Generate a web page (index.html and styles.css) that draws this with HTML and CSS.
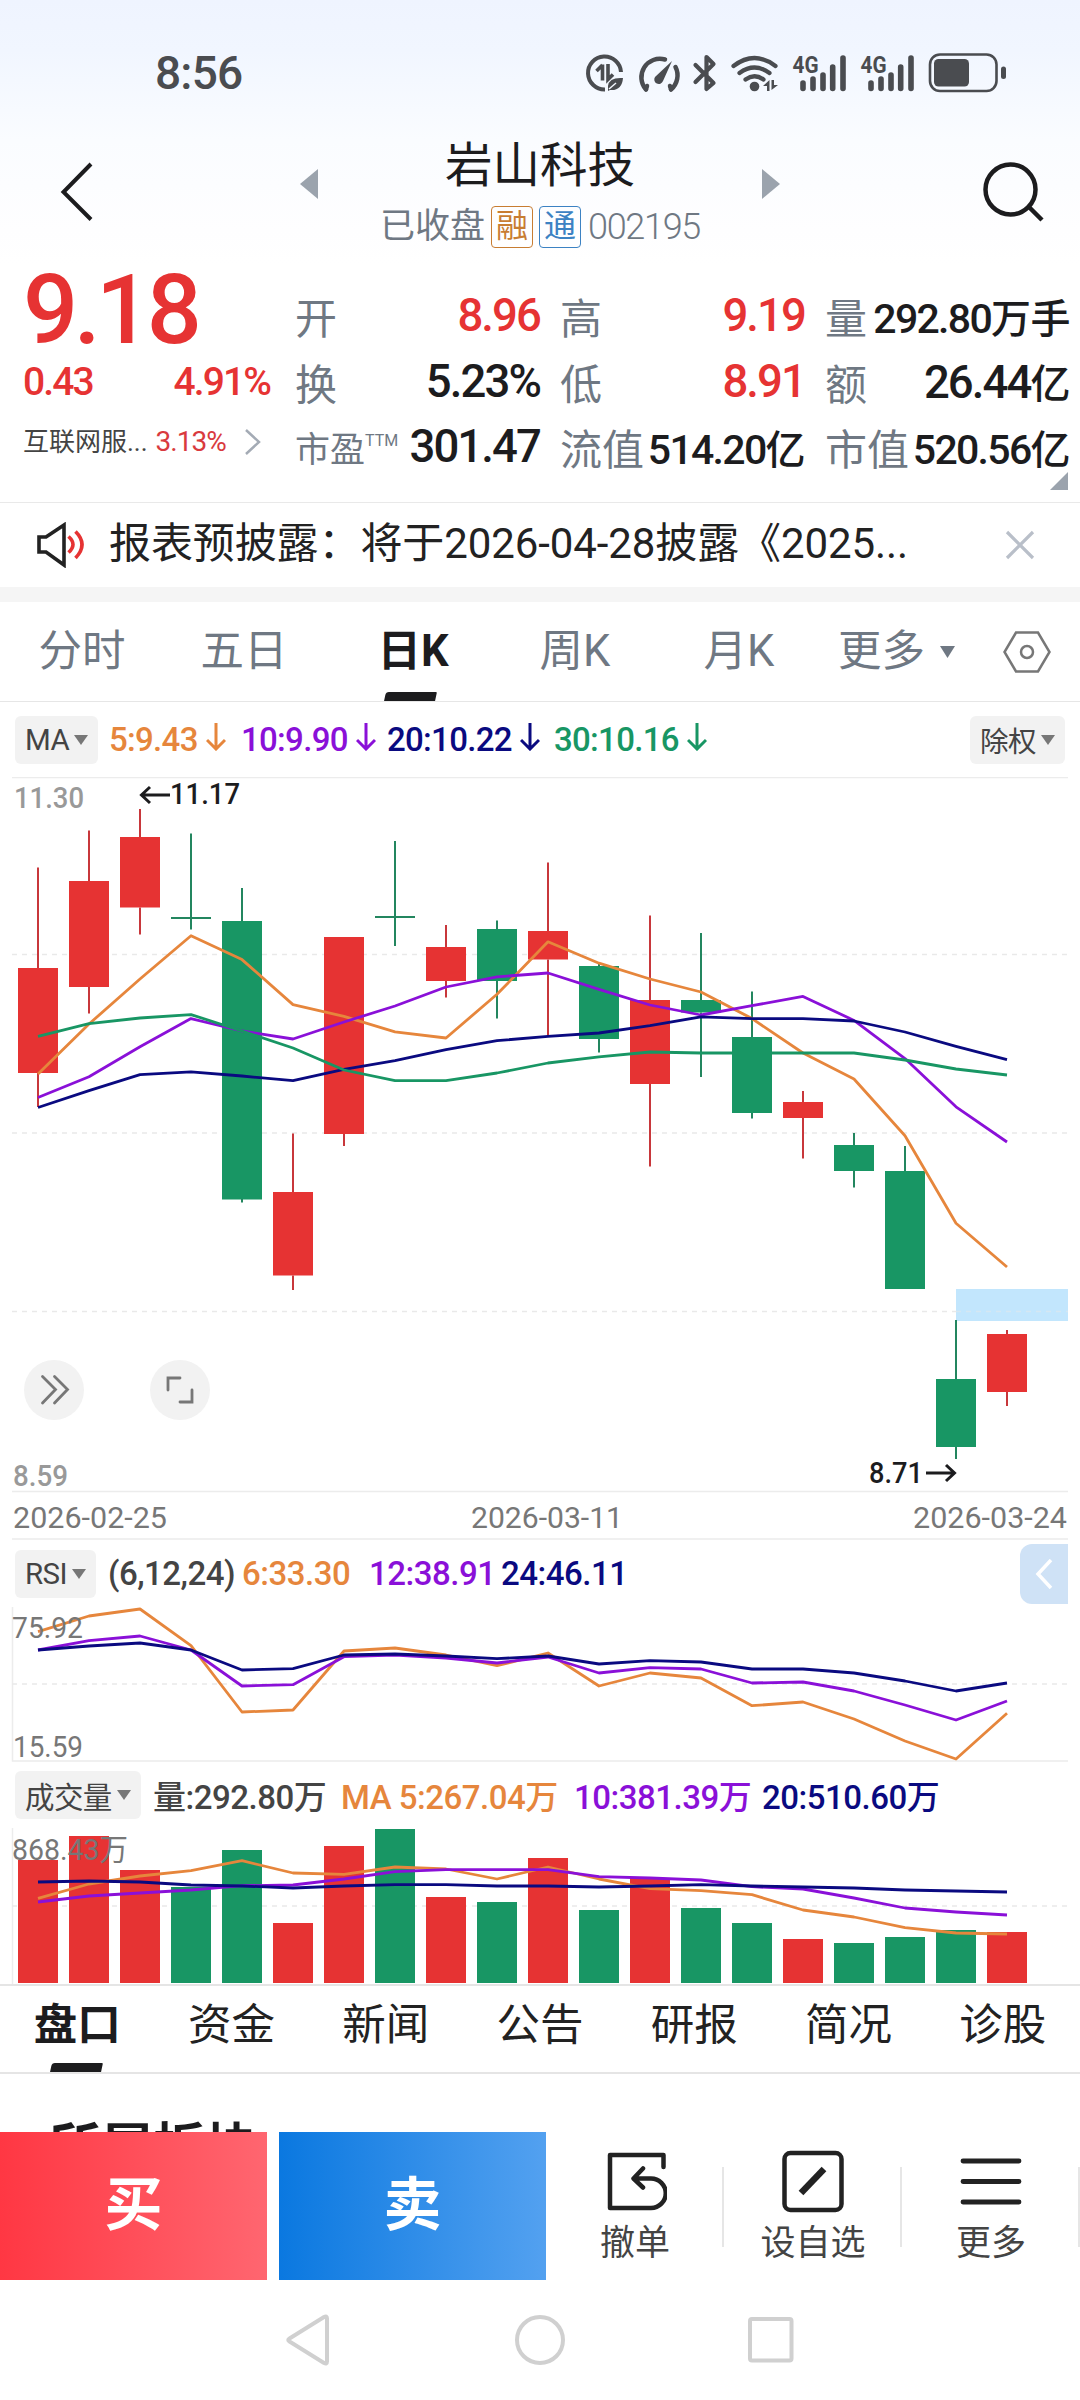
FILE: index.html
```html
<!DOCTYPE html>
<html lang="zh-CN">
<head>
    <meta charset="UTF-8">
    <meta name="viewport" content="width=device-width, initial-scale=1.0">
    <title>岩山科技 002195</title>
    <link rel="stylesheet" href="styles.css">
</head>
<body>
    <div class="top">
        <div class="status-bar">
            <span class="time">8:56</span>
            <svg class="status-icons" width="430" height="50" viewBox="584 48 430 50">
                <!-- data saver -->
                <g fill="none" stroke="#4a4c50" stroke-width="4">
                    <path d="M605 89.500A16.500 16.500 0 1 1 621 72"/>
                    <path d="M602.500 64.500v16M602.500 65l-6 6M608 64v15.500l5-5" stroke-width="3.600"/>
                </g>
                <path d="M608 86q1-9 15-8q-1 13-13 12l-2 1zM605 92l3-3" fill="#4a4c50"/>
                <path d="M609 89l7-6" stroke="#f4f8ff" stroke-width="1.500"/>
                <!-- gauge -->
                <g fill="none" stroke="#4a4c50" stroke-width="4.500" stroke-linecap="round">
                    <path d="M646 89.500A18.500 18.500 0 0 1 665 59.500M675.500 67A18.500 18.500 0 0 1 671 89.500"/>
                    <path d="M646 89l1-3M671 89l-1-3"/>
                </g>
                <path d="M672 61l-9 20a4.500 4.500 0 1 1-8-4z" fill="#4a4c50"/>
                <!-- bluetooth -->
                <path d="M695.500 65l18 18-7 6v-32l7 7-18 18" fill="none" stroke="#4a4c50" stroke-width="4.200" stroke-linejoin="round" stroke-linecap="round"/>
                <!-- wifi -->
                <g fill="none" stroke="#4a4c50" stroke-width="4.200" stroke-linecap="round">
                    <path d="M733.500 66q21-16 42 0M739.500 73q15-11 30 0M745.500 79.500q9-6.500 18 0"/>
                </g>
                <circle cx="754.500" cy="86.500" r="4.800" fill="#4a4c50"/>
                <path d="M769.500 80v11h-2.500v-5h-4zM771.500 90v-10h2.500v5h4z" fill="#4a4c50"/>
                <!-- sim 1 -->
                <text x="792.500" y="73" class="net" textLength="26" lengthAdjust="spacingAndGlyphs">4G</text>
                <path class="bars" d="M803 83v5.500M813 79v9.500M823 75v13.500M832.700 67v21.500M843 58v30.500"/>
                <!-- sim 2 -->
                <text x="860.500" y="73" class="net" textLength="26" lengthAdjust="spacingAndGlyphs">4G</text>
                <path class="bars" d="M871 83v5.500M881 79v9.500M891 75v13.500M900.700 67v21.500M911 58v30.500"/>
                <!-- battery -->
                <rect x="930" y="54.500" width="66.500" height="36.500" rx="10" fill="none" stroke="#4a4c50" stroke-width="2.600"/>
                <rect x="934" y="59" width="35" height="27.500" rx="4.500" fill="#4a4c50"/>
                <rect x="1001" y="66.500" width="5" height="12.500" rx="2.500" fill="#4a4c50"/>
            </svg>
        </div>

        <div class="header">
            <svg class="back" width="34" height="60" viewBox="0 0 34 60"><path d="M31 2L3.500 30 31 57.500" fill="none" stroke="#1c1c1e" stroke-width="4"/></svg>
            <svg class="prev" width="18" height="30" viewBox="0 0 18 30"><path d="M18 0v30L0 15z" fill="#9ba3ad"/></svg>
            <div class="title">
                <div class="name">岩山科技</div>
                <div class="sub">
                    <span>已收盘</span>
                    <span class="tag tag-rong">融</span>
                    <span class="tag tag-tong">通</span>
                    <span class="code">002195</span>
                </div>
            </div>
            <svg class="next" width="18" height="30" viewBox="0 0 18 30"><path d="M0 0v30L18 15z" fill="#9ba3ad"/></svg>
            <svg class="search" width="62" height="60" viewBox="0 0 62 60"><circle cx="27.500" cy="27.500" r="25" fill="none" stroke="#1c1c1e" stroke-width="4.500"/><path d="M46 45l13 13" stroke="#1c1c1e" stroke-width="4.500"/></svg>
        </div>
    </div>

    <div class="quote">
        <div class="price-box">
            <div class="price">9.18</div>
            <div class="change"><span>0.43</span><span>4.91%</span></div>
            <div class="sector">
                <span>互联网服...</span>
                <span class="sector-pct">3.13%</span>
                <svg width="18" height="28" viewBox="0 0 18 28"><path d="M2 2l13 12L2 26" fill="none" stroke="#a4abb5" stroke-width="2.500"/></svg>
            </div>
        </div>
        <div class="stats">
            <div class="stat"><span>开</span><b class="red">8.96</b></div>
            <div class="stat"><span>高</span><b class="red">9.19</b></div>
            <div class="stat"><span>量</span><b class="small">292.80<i>万手</i></b></div>
            <div class="stat"><span>换</span><b>5.23%</b></div>
            <div class="stat"><span>低</span><b class="red">8.91</b></div>
            <div class="stat"><span>额</span><b>26.44<i>亿</i></b></div>
            <div class="stat"><span class="pe">市盈<sup>TTM</sup></span><b>301.47</b></div>
            <div class="stat"><span>流值</span><b class="small">514.20<i>亿</i></b></div>
            <div class="stat"><span>市值</span><b class="small">520.56<i>亿</i></b></div>
        </div>
        <div class="corner"></div>
    </div>

    <div class="notice">
        <svg width="50" height="46" viewBox="36 524 50 46">
            <path d="M39 539h7l18-12v40l-18-13h-7z" fill="none" stroke="#222" stroke-width="3.600"/>
            <path d="M68.500 538.500q9 8 0 16M75.500 533.500q13 13 0 26.500" fill="none" stroke="#e63333" stroke-width="3.600"/>
        </svg>
        <p>报表预披露：将于2026-04-28披露《2025...</p>
        <svg width="30" height="30" viewBox="0 0 30 30"><path d="M2 2l26 26M28 2L2 28" stroke="#b9bfc9" stroke-width="3.200"/></svg>
    </div>

    <div class="period-tabs">
        <span>分时</span>
        <span>五日</span>
        <span class="active">日K</span>
        <span>周K</span>
        <span>月K</span>
        <span class="more">更多<svg width="15" height="12" viewBox="0 0 15 12"><path d="M0 0h15L7.500 12z" fill="#6f7883"/></svg></span>
        <svg class="setting" width="48" height="42" viewBox="0 0 48 42"><path d="M13 1.500h22L46.500 21 35 40.500H13L1.500 21z" fill="none" stroke="#777" stroke-width="2.500"/><circle cx="24" cy="21" r="6" fill="none" stroke="#777" stroke-width="2.500"/></svg>
    </div>

    <div class="legend legend-ma">
        <span class="pill">MA<em></em></span>
        <span class="orange">5:9.43<svg class="down" viewBox="0 0 20 28"><path d="M10 0v26M1 17l9 9 9-9"/></svg></span>
        <span class="purple">10:9.90<svg class="down" viewBox="0 0 20 28"><path d="M10 0v26M1 17l9 9 9-9"/></svg></span>
        <span class="navy">20:10.22<svg class="down" viewBox="0 0 20 28"><path d="M10 0v26M1 17l9 9 9-9"/></svg></span>
        <span class="green">30:10.16<svg class="down" viewBox="0 0 20 28"><path d="M10 0v26M1 17l9 9 9-9"/></svg></span>
        <span class="pill pill-right">除权<em></em></span>
    </div>

    <!-- daily candles -->
    <svg class="chart" width="1080" height="763" viewBox="0 777 1080 763">
        <path class="rule" d="M12 777.500H1068M12 1491.500H1068M12 1539H1068"/>
        <path class="grid" d="M12 954.500H1068M12 1133H1068M12 1311.500H1068"/>
        <rect x="956" y="1289" width="112" height="32" fill="#c2e6fd"/>
        <path class="grid" d="M956 1311.500H1068" opacity=".5"/>
        <path class="up" d="M18 968h40v105h-40zM69 881h40v106h-40zM120 837h40v70.500h-40zM273 1192h40v83.500h-40zM324 937h40v197h-40zM426 947h40v34h-40zM528 931h40v28.500h-40zM630 1000h40v84h-40zM783 1102h40v16h-40zM987 1334h40v58h-40z"/>
        <path class="down-bar" d="M222 921h40v278.500h-40zM477 929h40v52h-40zM579 966h40v73h-40zM681 1000h40v12.500h-40zM732 1037h40v76h-40zM834 1145h40v26h-40zM885 1171h40v118h-40zM936 1379h40v68h-40z"/>
        <path class="wick-up" d="M38 867.500V968M38 1073v34M89 830.500V881M89 987v26.500M140 809V837M140 907.500V934.500M293 1133.500V1192M293 1275.500V1290M344 1134v12M446 925v22M446 981v16.500M548 862.500V931M548 959.500v77M650 915.500V1000M650 1084v82.500M803 1091v11M803 1118v40.500M1007 1330v4M1007 1392v14"/>
        <path class="wick-down" d="M171 918h40M191 833.500v96M242 888v33M242 1199v3.500M375 917h40M395 841v105M497 920.500v8.500M497 981v37.500M599 962.500v4M599 1039v13.500M701 933V1000M701 1012.500v64.500M752 991.500V1037M752 1113v5.500M854 1133v12M854 1171v16.500M905 1146v25M956 1320v59M956 1447v12"/>
        <polyline class="line l-orange" points="38,1074 89,1024 140,979 191,935.700 242,959.600 293,1004.600 344,1016.400 395,1031.800 446,1038 497,994.300 548,941.800 599,963.200 650,979 701,992 752,1018.600 803,1053 854,1079 905,1135.700 956,1223.300 1007,1267"/>
        <polyline class="line l-purple" points="38,1097.500 89,1076.800 140,1046.800 191,1018.600 242,1031 293,1039 344,1022 395,1006 446,987 497,976.800 548,973 599,989.300 650,1005 701,1015 752,1005.700 803,996.400 854,1020.400 905,1058.600 956,1106.800 1007,1142"/>
        <polyline class="line l-navy" points="38,1107.500 89,1090.700 140,1074.600 191,1071.800 242,1076 293,1080.700 344,1069.300 395,1060.700 446,1049.600 497,1040.700 548,1036.400 599,1033 650,1025.700 701,1016.800 752,1018.600 803,1018.600 854,1021 905,1032 956,1046.400 1007,1059.600"/>
        <polyline class="line l-green" points="38,1036.400 89,1023.600 140,1018 191,1014.600 242,1031 293,1048 344,1070 395,1080.700 446,1080.700 497,1073 548,1063 599,1056.800 650,1052 701,1053 752,1053 803,1053 854,1053 905,1060 956,1069 1007,1075"/>
        <text class="axis bold" x="14" y="807.500" textLength="70" lengthAdjust="spacingAndGlyphs">11.30</text>
        <text class="axis bold" x="13" y="1485.500" textLength="55" lengthAdjust="spacingAndGlyphs">8.59</text>
        <path class="mark" d="M170 795H143M150 787l-8.500 8 8.500 8M926 1473h27M946 1465l8.500 8-8.500 8"/>
        <text class="peak" x="170" y="804" textLength="70" lengthAdjust="spacingAndGlyphs">11.17</text>
        <text class="peak" x="869" y="1482.500" textLength="54" lengthAdjust="spacingAndGlyphs">8.71</text>
        <circle cx="54" cy="1390" r="30" fill="#f2f2f2"/>
        <path class="tool" d="M42.500 1376.500l13 13-13 13.500M54.500 1376.500l13 13-13 13.500"/>
        <circle cx="180" cy="1390" r="30" fill="#f2f2f2"/>
        <path class="tool" d="M168 1390v-12h12M192 1390v12h-12"/>
        <text class="axis date" x="13" y="1528" textLength="154" lengthAdjust="spacingAndGlyphs">2026-02-25</text>
        <text class="axis date" x="471" y="1528" textLength="152" lengthAdjust="spacingAndGlyphs">2026-03-11</text>
        <text class="axis date" x="913" y="1528" textLength="154" lengthAdjust="spacingAndGlyphs">2026-03-24</text>
    </svg>

    <div class="legend legend-rsi">
        <span class="pill">RSI<em></em></span>
        <span class="dark">(6,12,24)</span>
        <span class="orange">6:33.30</span>
        <span class="purple">12:38.91</span>
        <span class="navy">24:46.11</span>
        <span class="drawer"><svg width="18" height="30" viewBox="0 0 18 30"><path d="M16 1L3 15l13 14" fill="none" stroke="#fff" stroke-width="3.500"/></svg></span>
    </div>

    <svg class="chart" width="1080" height="155" viewBox="0 1607 1080 155">
        <path class="rule" d="M12.500 1607V1761H1068"/>
        <path class="grid" d="M12 1684H1068"/>
        <polyline class="line l-orange" points="38,1631.700 89,1616 140,1609 191,1645.700 242,1712 293,1710 344,1651 395,1648 446,1655 497,1665.700 548,1653 599,1686 650,1673 701,1678 752,1705.700 803,1702 854,1719 905,1741 956,1759 1007,1713.300"/>
        <polyline class="line l-purple" points="38,1650 89,1640.700 140,1636 191,1650 242,1686 293,1684.700 344,1656.700 395,1655 446,1658 497,1663 548,1657 599,1673 650,1667.700 701,1669 752,1683 803,1682 854,1691 905,1705 956,1720 1007,1701"/>
        <polyline class="line l-navy" points="38,1650 89,1646 140,1643 191,1650 242,1670 293,1668.700 344,1655 395,1654 446,1656 497,1658.700 548,1656 599,1664 650,1660.700 701,1662 752,1669 803,1669 854,1673 905,1681 956,1691 1007,1683"/>
        <text class="axis date" x="12" y="1637.500" textLength="71" lengthAdjust="spacingAndGlyphs">75.92</text>
        <text class="axis date" x="13" y="1757" textLength="70" lengthAdjust="spacingAndGlyphs">15.59</text>
    </svg>

    <div class="legend legend-vol">
        <span class="pill">成交量<em></em></span>
        <span class="dark">量:292.80万</span>
        <span class="orange">MA 5:267.04万</span>
        <span class="purple">10:381.39万</span>
        <span class="navy">20:510.60万</span>
    </div>

    <svg class="chart" width="1080" height="156" viewBox="0 1828 1080 156">
        <path class="rule" d="M12.500 1828V1984"/>
        <path class="grid" d="M12 1906H1068"/>
        <path class="up" d="M18 1860h40v123h-40zM69 1836h40v147h-40zM120 1870h40v113h-40zM273 1923h40v60h-40zM324 1846h40v137h-40zM426 1897h40v86h-40zM528 1858h40v125h-40zM630 1878h40v105h-40zM783 1939h40v44h-40zM987 1932h40v51h-40z"/>
        <path class="down-bar" d="M171 1887h40v96h-40zM222 1850h40v133h-40zM375 1829h40v154h-40zM477 1902h40v81h-40zM579 1910h40v73h-40zM681 1908h40v75h-40zM732 1923h40v60h-40zM834 1943h40v40h-40zM885 1937h40v46h-40zM936 1930h40v53h-40z"/>
        <polyline class="line l-orange" points="38,1898.300 89,1884 140,1876 191,1870.700 242,1860.700 293,1873 344,1874.300 395,1867 446,1869 497,1879 548,1867 599,1879 650,1888.700 701,1890.700 752,1894.700 803,1910 854,1917 905,1927.700 956,1933 1007,1934"/>
        <polyline class="line l-purple" points="38,1902 89,1896 140,1893 191,1890 242,1885.700 293,1885 344,1879 395,1871.700 446,1869.700 497,1869.700 548,1869.700 599,1876.700 650,1878 701,1880 752,1886.700 803,1889 854,1898 905,1908 956,1912 1007,1915"/>
        <polyline class="line l-navy" points="38,1882 89,1881 140,1882 191,1885 242,1886 293,1888 344,1886 395,1884.700 446,1884.700 497,1886 548,1886 599,1887 650,1886 701,1884.700 752,1886 803,1887 854,1888 905,1890 956,1891 1007,1892"/>
        <text class="axis date" x="12" y="1859.500" textLength="116" lengthAdjust="spacingAndGlyphs">868.43万</text>
    </svg>

    <div class="info-tabs">
        <span class="active">盘口</span>
        <span>资金</span>
        <span>新闻</span>
        <span>公告</span>
        <span>研报</span>
        <span>简况</span>
        <span>诊股</span>
    </div>
    <div class="section"><h2>所属板块</h2></div>

    <div class="trade-bar">
        <div class="trade buy">买</div>
        <div class="trade sell">卖</div>
        <div class="action">
            <svg width="64" height="64" viewBox="603 2150 64 64"><path d="M663.500 2167v-12h-53.500v53h41a14 14 0 0 0 0-29.500H634M643 2168.500l-9.500 10 9.500 9" fill="none" stroke="#222" stroke-width="4.500" stroke-linejoin="round" stroke-linecap="round"/></svg>
            <span>撤单</span>
        </div>
        <div class="action">
            <svg width="64" height="64" viewBox="781.500 2150 64 64"><rect x="785" y="2153" width="57" height="57" rx="6" fill="none" stroke="#222" stroke-width="4.500"/><path d="M801.500 2193l23-24" stroke="#222" stroke-width="6.500"/></svg>
            <span>设自选</span>
        </div>
        <div class="action">
            <svg width="64" height="64" viewBox="959 2150 64 64"><path d="M963 2161h56M963 2181.500h56M963 2202h56" stroke="#222" stroke-width="4.800" stroke-linecap="round"/></svg>
            <span>更多</span>
        </div>
    </div>

    <div class="nav-bar">
        <svg width="46" height="54" viewBox="0 0 46 54"><path d="M4.500 25.500Q2 27 4.500 28.500L39 50q3 1.500 3-1.500V5.500q0-3-3-1.500z" fill="none" stroke="#d0d0d0" stroke-width="4"/></svg>
        <svg width="54" height="54" viewBox="0 0 54 54"><circle cx="27" cy="27" r="23" fill="none" stroke="#d0d0d0" stroke-width="4"/></svg>
        <svg width="46" height="54" viewBox="0 0 46 54"><rect x="2" y="6" width="41.500" height="41.500" rx="2" fill="none" stroke="#d0d0d0" stroke-width="4"/></svg>
    </div>
</body>
</html>
```
FILE: styles.css
```css
* {
    box-sizing: border-box;
}
body {
    margin: 0;
    width: 1080px;
    height: 2400px;
    overflow: hidden;
    background-color: #fff;
    color: #222;
    font-family: Roboto, "Noto Sans CJK SC", sans-serif;
}
svg {
    display: block;
    flex-shrink: 0;
}

/* status bar and title */
.top {
    height: 265px;
    background: linear-gradient(#eff4ff 0, #f1f6ff 50px, #fafcff 140px, #fefeff 230px, #fff 265px);
}
.status-bar {
    display: flex;
    justify-content: space-between;
    height: 137px;
    padding: 48px 66px 0 155px;
}
.time {
    font-size: 46px;
    line-height: 51px;
    font-weight: 500;
    letter-spacing: -0.8px;
    color: #4a4c50;
}
.net {
    font-size: 24px;
    font-weight: 700;
    fill: #4a4c50;
}
.bars {
    stroke: #4a4c50;
    stroke-width: 5.6px;
    stroke-linecap: round;
}
.header {
    display: flex;
    padding: 0 34px 0 60px;
}
.back, .search {
    margin-top: 25px;
}
.prev, .next {
    margin-top: 32px;
}
.prev {
    margin-left: 206px;
}
.title {
    width: 444px;
    text-align: center;
}
.name {
    font-size: 47.5px;
    line-height: 58px;
    color: #1c1c1e;
}
.sub {
    display: flex;
    align-items: center;
    justify-content: center;
    margin-top: 11px;
    padding-left: 0;
    font-size: 35px;
    line-height: 42px;
    color: #6f7883;
}
.tag {
    width: 42px;
    height: 42px;
    margin-left: 6px;
    border: 1.5px solid;
    border-radius: 4px;
    font-size: 32px;
    line-height: 38px;
}
.tag-rong {
    color: #c87d32;
}
.tag-tong {
    color: #3c82c3;
}
.code {
    margin-left: 7px;
    font-size: 36px;
    font-weight: 300;
    letter-spacing: -1.3px;
}
.next {
    margin-right: 203px;
}

/* quote */
.quote {
    position: relative;
    display: flex;
    height: 237px;
}
.price-box {
    width: 295px;
    padding-left: 23px;
    color: #e63333;
}
.price {
    font-size: 97px;
    line-height: 90px;
    font-weight: 500;
    letter-spacing: -4.5px;
}
.change {
    display: flex;
    justify-content: space-between;
    padding-right: 25px;
    font-size: 39px;
    line-height: 54px;
    font-weight: 500;
    letter-spacing: -1.9px;
}
.sector {
    display: flex;
    align-items: center;
    margin-top: 15px;
    font-size: 26px;
    line-height: 36px;
    color: #444;
}
.sector-pct {
    margin: 0 18px 0 8px;
    font-size: 28px;
    letter-spacing: -1px;
    color: #d93a3e;
}
.stats {
    display: grid;
    grid-template-columns: 245px 245px 245px;
    grid-template-rows: 65px 66px 65px;
    column-gap: 20px;
    width: 775px;
    padding-top: 18px;
}
.stat {
    display: flex;
    align-items: center;
    justify-content: space-between;
    white-space: nowrap;
    font-size: 42px;
    color: #6f7883;
}
.stat b {
    font-size: 45.5px;
    font-weight: 500;
    letter-spacing: -1.9px;
    color: #1c1c1e;
}
.stat b.red {
    color: #e63333;
}
.stat b.small {
    font-size: 41px;
    letter-spacing: -1.7px;
}
.stat i {
    font-style: normal;
    font-size: 40px;
    letter-spacing: -0.5px;
}
.stat .pe {
    font-size: 35px;
}
.pe sup {
    font-size: 16px;
    line-height: 0;
    vertical-align: 16px;
}
.corner {
    position: absolute;
    right: 12px;
    bottom: 12px;
    border-left: 18px solid transparent;
    border-bottom: 18px solid #9ba3ad;
}

.notice {
    display: flex;
    align-items: center;
    height: 100px;
    padding: 0 45px 0 36px;
    border-top: 1px solid #e9e9e9;
    border-bottom: 15px solid #f5f5f5;
}
.notice p {
    flex: 1;
    margin: 0 0 3px 23px;
    font-size: 42px;
    line-height: 50px;
    white-space: nowrap;
    letter-spacing: -0.1px;
}

/* period tabs */
.period-tabs {
    display: grid;
    grid-template-columns: 164px 160px 178px 146px 182px 173px 77px;
    align-items: center;
    height: 100px;
    border-bottom: 1px solid #e6e6e6;
    font-size: 43.5px;
    line-height: 99px;
    text-align: center;
    color: #6f7883;
}
.period-tabs .active, .info-tabs .active {
    position: relative;
    font-weight: 700;
    color: #1c1c1e;
}
.period-tabs .active::after, .info-tabs .active::after {
    content: "";
    position: absolute;
    left: 61px;
    bottom: 0;
    width: 51px;
    height: 9px;
    border-radius: 3px 1px 0 0;
    background-color: #1c1c1e;
    transform: skewX(-12deg);
}
.period-tabs .more {
    display: flex;
    align-items: center;
    gap: 15px;
    padding-left: 8px;
}

/* indicator legends */
.legend {
    display: grid;
    align-items: center;
    padding-left: 15px;
    white-space: nowrap;
    font-size: 33px;
    font-weight: 500;
    letter-spacing: -0.7px;
}
.legend > span {
    display: flex;
    align-items: center;
}
.legend-ma {
    grid-template-columns: 94px 132px 146px 167px 416px 96px;
    height: 75px;
}
.legend-rsi {
    grid-template-columns: 93px 134px 127px 132px 519px 48px;
    height: 67px;
}
.legend-vol {
    grid-template-columns: 138px 188px 233px 188px 190px;
    height: 66px;
}
.legend-vol > span, .legend-rsi > span {
    letter-spacing: -0.5px;
}
.legend .pill {
    justify-self: start;
    gap: 5px;
    height: 48px;
    padding: 0 10px;
    border-radius: 6px;
    background-color: #f2f2f2;
    font-size: 29.5px;
    font-weight: 400;
    letter-spacing: -0.6px;
    color: #444;
}
.legend .pill-right {
    font-size: 28.5px;
}
.pill em {
    border-top: 10px solid #777;
    border-left: 7px solid transparent;
    border-right: 7px solid transparent;
}
.down {
    width: 20px;
    height: 28px;
    margin: -6px 0 0 8px;
    fill: none;
    stroke: currentColor;
    stroke-width: 3px;
}
.drawer {
    justify-content: center;
    height: 60px;
    border-radius: 12px 0 0 12px;
    background-color: #cfe2f6;
}
.orange { color: #e6863c; }
.purple { color: #8a10d8; }
.navy { color: #0a0a80; }
.green { color: #189664; }
.dark { color: #444; }

/* charts */
.rule {
    fill: none;
    stroke: #ececec;
    stroke-width: 1.5px;
}
.grid {
    stroke: #e9e9e9;
    stroke-width: 1.5px;
    stroke-dasharray: 5 5;
}
.up { fill: #e63333; }
.down-bar { fill: #189664; }
.wick-up, .wick-down {
    stroke: #c8373b;
    stroke-width: 2px;
}
.wick-down {
    stroke: #23865f;
}
.line {
    fill: none;
    stroke-width: 2.8px;
    stroke-linejoin: round;
}
.l-orange { stroke: #e6863c; }
.l-purple { stroke: #8a10d8; }
.l-navy { stroke: #0a0a80; }
.l-green { stroke: #189664; }
.axis {
    font-size: 30px;
    fill: #999;
}
.axis.bold {
    font-weight: 500;
}
.axis.date {
    fill: #777;
}
.peak {
    font-size: 30px;
    font-weight: 500;
    fill: #1c1c1e;
}
.mark {
    fill: none;
    stroke: #1c1c1e;
    stroke-width: 3px;
}
.tool {
    fill: none;
    stroke: #777;
    stroke-width: 2.8px;
    stroke-linecap: round;
}

/* info tabs */
.info-tabs {
    display: grid;
    grid-template-columns: repeat(7, 1fr);
    height: 90px;
    border-top: 2px solid #e5e5e5;
    border-bottom: 2px solid #e5e5e5;
    font-size: 43.5px;
    line-height: 80px;
    text-align: center;
}
.info-tabs .active::after {
    left: 51px;
}
.section {
    height: 58px;
    padding-left: 49px;
    overflow: hidden;
}
.section h2 {
    margin: 37px 0 0;
    font-size: 52px;
    line-height: 75px;
    font-weight: 700;
    color: #1c1c1e;
}

/* bottom bars */
.trade-bar {
    display: flex;
    height: 148px;
}
.trade {
    width: 267px;
    margin-right: 12px;
    font-size: 58px;
    line-height: 146px;
    font-weight: 700;
    text-align: center;
    color: #fff;
}
.buy {
    background: linear-gradient(90deg, #ff3743, #ff6670);
}
.sell {
    margin-right: 0;
    background: linear-gradient(90deg, #0a78e0, #53a1f0);
}
.action {
    position: relative;
    display: flex;
    flex-direction: column;
    align-items: center;
    width: 178px;
    padding-top: 18px;
    font-size: 35px;
    line-height: 60px;
    color: #444;
}
.action::after {
    content: "";
    position: absolute;
    right: 0;
    top: 35px;
    width: 2px;
    height: 80px;
    background-color: #e6e6e6;
}
.nav-bar {
    display: flex;
    align-items: center;
    justify-content: space-between;
    height: 120px;
    padding: 0 286px 0 285px;
}
```
